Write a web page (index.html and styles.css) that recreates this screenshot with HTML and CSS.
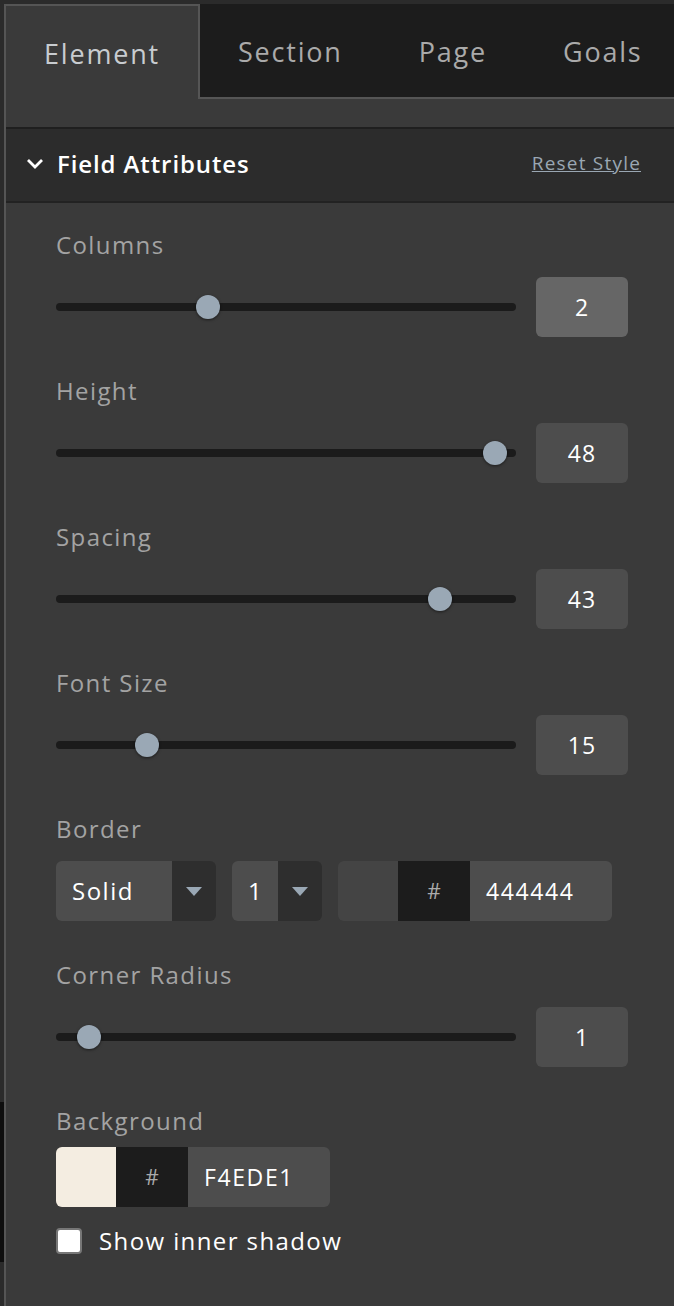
FILE: index.html
```html
<!DOCTYPE html>
<html lang="en">
<head>
    <meta charset="UTF-8">
    <title>Element Settings</title>
    <link rel="stylesheet" href="styles.css">
</head>
<body>
	<div id="panel">
		<ul id="tabs">
			<li class="on">Element</li>
			<li>Section</li>
			<li>Page</li>
			<li>Goals</li>
		</ul>
		<div class="spacer"></div>
		<div id="head">
			<svg class="chev" width="18" height="11" viewBox="0 0 18 11"><polyline points="2,2 9,9 16,2" fill="none" stroke="#ffffff" stroke-width="2.8"/></svg>
			<span class="title">Field Attributes</span>
			<a class="reset">Reset Style</a>
		</div>
		<div id="body">
			<div class="group">
				<div class="label">Columns</div>
				<div class="row">
					<div class="track"><div class="thumb" style="left:140px"></div></div>
					<div class="num focus">2</div>
				</div>
			</div>
			<div class="group">
				<div class="label">Height</div>
				<div class="row">
					<div class="track"><div class="thumb" style="left:427px"></div></div>
					<div class="num">48</div>
				</div>
			</div>
			<div class="group">
				<div class="label">Spacing</div>
				<div class="row">
					<div class="track"><div class="thumb" style="left:372px"></div></div>
					<div class="num">43</div>
				</div>
			</div>
			<div class="group">
				<div class="label">Font Size</div>
				<div class="row">
					<div class="track"><div class="thumb" style="left:79px"></div></div>
					<div class="num">15</div>
				</div>
			</div>
			<div class="group">
				<div class="label">Border</div>
				<div class="row">
					<div class="select wide">
						<span class="val">Solid</span>
						<span class="arrow"><i></i></span>
					</div>
					<div class="select small">
						<span class="val">1</span>
						<span class="arrow"><i></i></span>
					</div>
					<div class="color">
						<span class="swatch" style="background:#444444"></span>
						<span class="hash">#</span>
						<span class="hex">444444</span>
					</div>
				</div>
			</div>
			<div class="group">
				<div class="label">Corner Radius</div>
				<div class="row">
					<div class="track"><div class="thumb" style="left:21px"></div></div>
					<div class="num">1</div>
				</div>
			</div>
			<div class="group last">
				<div class="label">Background</div>
				<div class="row">
					<div class="color short">
						<span class="swatch" style="background:#f4ede1"></span>
						<span class="hash">#</span>
						<span class="hex">F4EDE1</span>
					</div>
				</div>
				<label class="check">
					<span class="box"></span>
					<span>Show inner shadow</span>
				</label>
			</div>
		</div>
	</div>
</body>
</html>
```

FILE: styles.css
```css
*{
	padding: 0px;
	margin: 0px;
	list-style: none;
	box-sizing: border-box;
}
body{
	height: 1306px;
	padding: 4px 0 0 4px;
	overflow: hidden;
	font-family: "Open Sans", "Noto Sans", sans-serif;
	background: linear-gradient(to bottom, #2b2b2b 1102px, #0e0e0e 1102px, #0e0e0e 1262px, #2b2b2b 1262px);
}
#panel{
	height: 1302px;
	background-color: #3a3a3a;
	border-left: 2px solid #555555;
}
#tabs{
	display: flex;
	height: 95px;
}
#tabs li{
	display: flex;
	align-items: center;
	padding: 2px 38px 0;
	font-size: 27px;
	letter-spacing: 1.8px;
	color: #aaaaaa;
	background-color: #1c1c1c;
	border-bottom: 2px solid #555555;
}
#tabs li.on{
	width: 194px;
	color: #c8ccd0;
	background-color: #3a3a3a;
	border-top: 2px solid #555555;
	border-bottom: none;
	border-right: 2px solid #555555;
}
#tabs li:last-child{
	flex: 1;
}
.spacer{
	height: 28px;
}
#head{
	display: flex;
	align-items: center;
	height: 76px;
	padding: 0 33px 4px 20px;
	background-color: #2c2c2c;
	border-top: 2px solid #1f1f1f;
	border-bottom: 2px solid #222222;
}
.chev{
	margin-right: 13px;
}
.title{
	flex: 1;
	color: #ffffff;
	font-size: 24px;
	font-weight: 600;
	letter-spacing: 0.9px;
}
.reset{
	color: #9aa7b3;
	font-size: 19px;
	letter-spacing: 1.2px;
	text-decoration: underline;
}
#body{
	padding: 27px 46px 0 50px;
}
.group{
	height: 146px;
}
.label{
	height: 30px;
	line-height: 30px;
	font-size: 24px;
	letter-spacing: 1.4px;
	color: #a3a3a3;
	margin-bottom: 17px;
}
.row{
	display: flex;
	align-items: center;
	gap: 20px;
	height: 60px;
}
.track{
	position: relative;
	flex: 1;
	height: 8px;
	border-radius: 4px;
	background-color: #1b1b1b;
}
.thumb{
	position: absolute;
	top: -8px;
	width: 24px;
	height: 24px;
	border-radius: 50%;
	background-color: #9aa8b5;
	box-shadow: 0 1px 3px rgba(0,0,0,0.5);
}
.num{
	width: 92px;
	height: 60px;
	line-height: 60px;
	text-align: center;
	font-size: 23px;
	letter-spacing: 1px;
	color: #ffffff;
	background-color: #4d4d4d;
	border-radius: 6px;
}
.num.focus{
	background-color: #666666;
}
.select{
	display: flex;
	height: 60px;
	border-radius: 6px;
	overflow: hidden;
	margin-right: -4px;
}
.select .val{
	flex: 1;
	line-height: 60px;
	padding-left: 16px;
	font-size: 24px;
	letter-spacing: 1.5px;
	color: #ffffff;
	background-color: #4d4d4d;
}
.select .arrow{
	display: flex;
	align-items: center;
	justify-content: center;
	width: 44px;
	background-color: #2e2e2e;
}
.select .arrow i{
	width: 0;
	height: 0;
	border-left: 8px solid transparent;
	border-right: 8px solid transparent;
	border-top: 9px solid #9aa8b5;
}
.wide{
	width: 160px;
}
.small{
	width: 90px;
}
.color{
	display: flex;
	width: 274px;
	height: 60px;
	border-radius: 6px;
	overflow: hidden;
}
.color.short{
	width: 274px;
}
.color .swatch{
	width: 60px;
}
.color .hash{
	width: 72px;
	line-height: 60px;
	text-align: center;
	font-size: 21px;
	color: #aaaaaa;
	background-color: #1c1c1c;
}
.color .hex{
	flex: 1;
	line-height: 60px;
	padding-left: 16px;
	font-size: 23px;
	letter-spacing: 1.6px;
	color: #ffffff;
	background-color: #4d4d4d;
}
.last .label{
	margin-bottom: 11px;
}
.check{
	display: flex;
	align-items: center;
	gap: 17px;
	margin-top: 17px;
	font-size: 24px;
	letter-spacing: 1.4px;
	color: #ffffff;
}
.check .box{
	width: 26px;
	height: 26px;
	border-radius: 4px;
	background-color: #ffffff;
	border: 2px solid #777777;
}
```
